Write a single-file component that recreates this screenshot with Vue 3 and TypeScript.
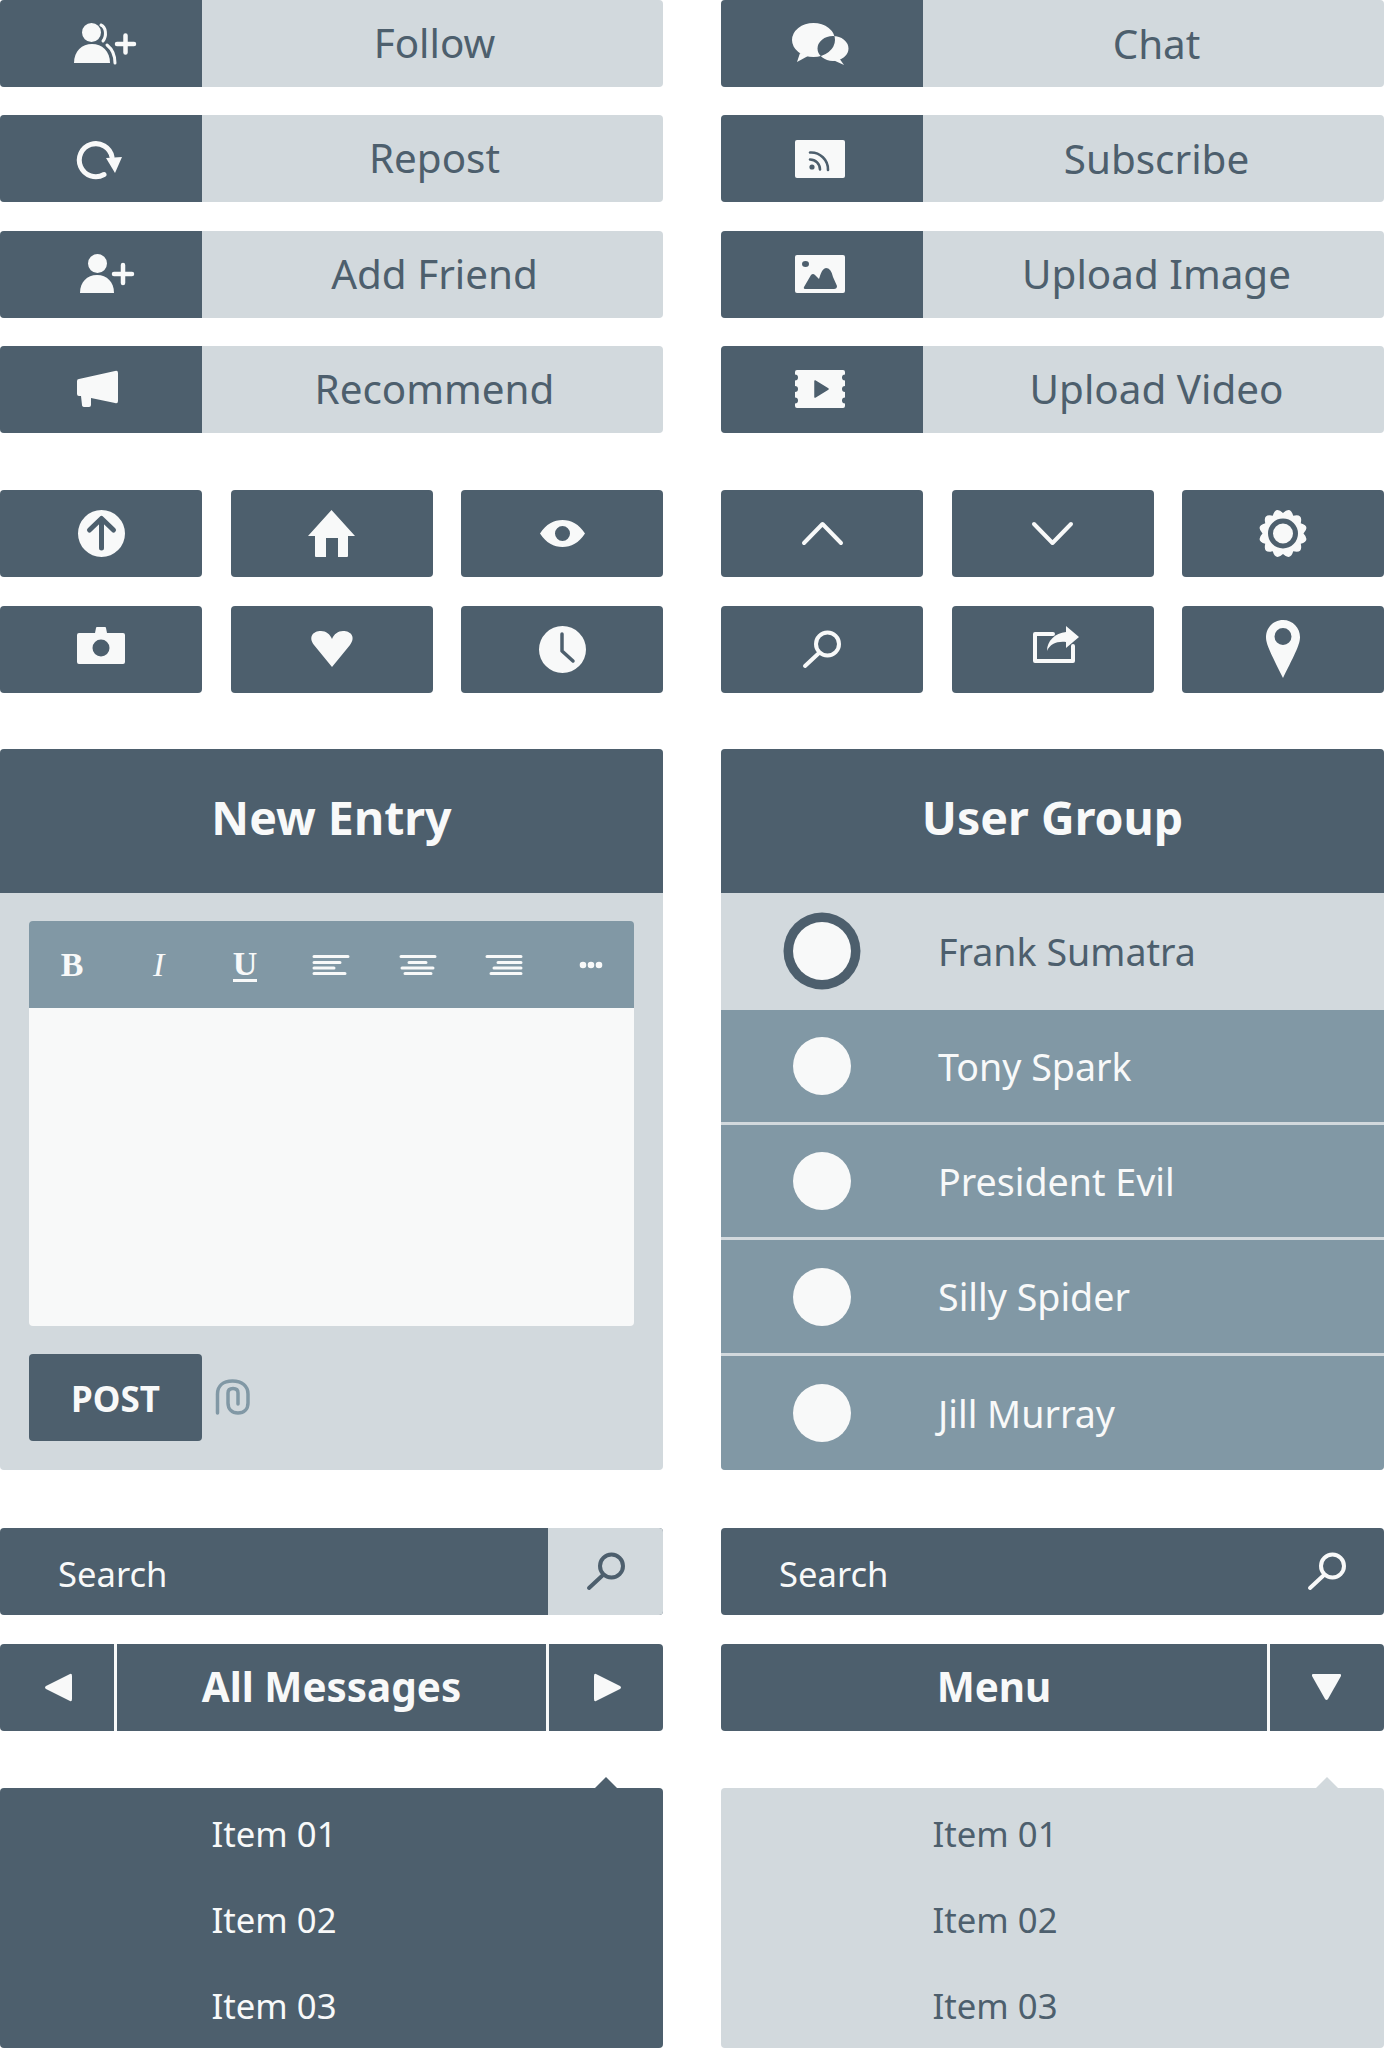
<script setup lang="ts">
import { h } from 'vue'

type Shape = { d: string; s?: number; cut?: boolean }
type IconDef = { w: number; h: number; x?: number; shapes: Shape[] }

const circle = (cx: number, cy: number, r: number, ry = r) =>
  `M${cx - r} ${cy}a${r} ${ry} 0 1 0 ${2 * r} 0a${r} ${ry} 0 1 0 ${-2 * r} 0Z`

const gear = () => {
  const pt = (r: number, a: number) => `${(24 + r * Math.cos(a)).toFixed(2)} ${(23.5 + r * Math.sin(a)).toFixed(2)}`
  const step = Math.PI / 6
  let d = `M${pt(20.5, 0)}`
  for (let i = 0; i < 12; i++) {
    d += `Q${pt(28.5, (i + 0.5) * step)} ${pt(20.5, (i + 1) * step)}`
  }
  return d + 'Z'
}

const icons: Record<string, IconDef> = {
  follow: {
    w: 62,
    h: 41,
    shapes: [
      { d: circle(17.5, 9.5, 9.5) },
      { d: 'M0 40C0 28 8 21 18 21S36 28 36 40Z' },
      { d: 'M27 2C32 4 33 13 29 18', s: 3 },
      { d: 'M33 22C38 26 41 32 41 40', s: 3 },
      { d: 'M43 21H60M51.5 12.5V29.5', s: 4.5 },
    ],
  },
  repost: {
    w: 44,
    h: 38,
    shapes: [
      { d: 'M34 17A16.5 16.5 0 1 0 26 34.5', s: 5 },
      { d: 'M28 18L44 17L37 33Z' },
    ],
  },
  friend: {
    w: 54,
    h: 40,
    shapes: [
      { d: circle(17.5, 9.5, 9.5) },
      { d: 'M0 39C0 28 7 21 17 21S34 28 34 39Z' },
      { d: 'M34 20H52M43 11V29', s: 4.5 },
    ],
  },
  megaphone: {
    w: 42,
    h: 38,
    shapes: [
      { d: 'M3 9L39 1Q42 0 42 3V31Q42 34 39 33L15 28V35Q15 37 13 37H9Q6 37 6 35L5 26H3Q1 26 1 24V11Q1 9 3 9Z' },
    ],
  },
  chat: {
    w: 57,
    h: 42,
    shapes: [
      { d: circle(21.5, 17, 21.5, 17) + circle(41, 25.5, 15.5, 12.5) },
      { d: 'M8 30L5 39L16 33Z' },
      { d: 'M47 35L52 42L41 37Z' },
    ],
  },
  rss: {
    w: 50,
    h: 38,
    shapes: [
      { d: 'M2 0H48Q50 0 50 2V36Q50 38 48 38H2Q0 38 0 36V2Q0 0 2 0Z' },
      { d: circle(17, 27, 2.6), cut: true },
      { d: 'M15 19.5A10 10 0 0 1 25 29.5', s: 2.6, cut: true },
      { d: 'M15 12.5A17 17 0 0 1 33 30', s: 2.6, cut: true },
    ],
  },
  image: {
    w: 50,
    h: 38,
    shapes: [
      { d: 'M2 0H48Q50 0 50 2V36Q50 38 48 38H2Q0 38 0 36V2Q0 0 2 0Z' },
      { d: circle(10.5, 9, 3.5, 3), cut: true },
      { d: 'M9 32L16 20Q18 18 20 20L24 24Q27 13 31 13Q36 13 38 22L42 31Q42 34 39 34H11Q8 34 9 32Z', cut: true },
    ],
  },
  video: {
    w: 50,
    h: 38,
    shapes: [
      { d: 'M2 0H48Q50 0 50 2V4.5A3 3 0 0 0 50 10.5V16A3 3 0 0 0 50 22V27.5A3 3 0 0 0 50 33.5V36Q50 38 48 38H2Q0 38 0 36V33.5A3 3 0 0 0 0 27.5V22A3 3 0 0 0 0 16V10.5A3 3 0 0 0 0 4.5V2Q0 0 2 0Z' },
      { d: 'M20 11L33 19L20 27Z', s: 1.5, cut: true },
      { d: 'M20 11L33 19L20 27Z', cut: true },
    ],
  },
  up: {
    w: 47,
    h: 47,
    shapes: [
      { d: circle(23.5, 23.5, 23.5) },
      { d: 'M23.5 38V10M11.5 20L23.5 8.5L35.5 20', s: 5, cut: true },
    ],
  },
  home: {
    w: 47,
    h: 47,
    shapes: [{ d: 'M23.5 0L47 26H40V46Q40 47 39 47H30V28H18V47H8Q7 47 7 46V26H0Z' }],
  },
  eye: {
    w: 45,
    h: 27,
    shapes: [{ d: 'M0 13.5C6 4 14 0 22.5 0S39 4 45 13.5C39 23 31 27 22.5 27S6 23 0 13.5Z' + circle(22.5, 13.5, 7.5) }],
  },
  // extra height / x keep these two off-centre in the tile, as drawn
  camera: {
    w: 48,
    h: 45,
    shapes: [
      { d: 'M18 6L19 1Q19 0 20 0H28Q29 0 29 1L30 6H46Q48 6 48 8V35Q48 37 46 37H2Q0 37 0 35V8Q0 6 2 6Z' + circle(24, 21, 8.5) },
    ],
  },
  heart: {
    w: 42,
    h: 36,
    shapes: [{ d: 'M21 36L3 14C-3 6 2 0 10 0C15 0 19 3 21 8C23 3 27 0 32 0C40 0 45 6 39 14Z' }],
  },
  clock: {
    w: 47,
    h: 47,
    shapes: [
      { d: circle(23.5, 23.5, 23.5) },
      { d: 'M23 8V25L34 35', s: 3.5, cut: true },
    ],
  },
  chevUp: { w: 41, h: 23, shapes: [{ d: 'M2 21L20.5 2L39 21', s: 4 }] },
  chevDown: { w: 41, h: 23, shapes: [{ d: 'M2 2L20.5 21L39 2', s: 4 }] },
  gear: {
    w: 48,
    h: 47,
    shapes: [
      { d: gear() },
      { d: circle(24, 23.5, 12.5), s: 5, cut: true },
    ],
  },
  search: {
    w: 38,
    h: 38,
    shapes: [
      { d: circle(24.5, 14, 11.5), s: 4 },
      { d: 'M16 23L2 36', s: 4 },
    ],
  },
  share: {
    w: 53,
    h: 46,
    x: -7,
    shapes: [
      { d: 'M20 8H2V35H40V20', s: 4 },
      { d: 'M33 0L46 11L33 22V16C24 15 17 18 14 25C14 15 22 7 33 6Z' },
    ],
  },
  pin: {
    w: 34,
    h: 58,
    shapes: [{ d: 'M17 0C7 0 0 8 0 17C0 24 4 32 17 58C30 32 34 24 34 17C34 8 27 0 17 0Z' + circle(17, 16.5, 8.5) }],
  },
  clip: {
    w: 35,
    h: 36,
    shapes: [
      { d: 'M2.5 34V15C2.5 7 8 2 17.5 2S33 7 33 15V24C33 30 29 34 23 34S13 30 13 24V14C13 11 15 9.5 18 9.5S23 11 23 14V25', s: 3.5 },
    ],
  },
  prev: { w: 27, h: 29, shapes: [{ d: 'M25 1Q27 0 27 3V26Q27 29 25 28L1 16Q-1 14.5 1 13Z' }] },
  next: { w: 27, h: 29, shapes: [{ d: 'M2 1Q0 0 0 3V26Q0 29 2 28L26 16Q28 14.5 26 13Z' }] },
  drop: { w: 29, h: 26, shapes: [{ d: 'M1 0H28Q29.5 0 29 2L16 25Q14.5 27 13 25L0 2Q-.5 0 1 0Z' }] },
  alignLeft: { w: 34, h: 20, shapes: [{ d: 'M0 1.5H34M0 7.5H26M0 13H20M0 18.5H31', s: 3 }] },
  alignCenter: { w: 34, h: 20, shapes: [{ d: 'M0 1.5H34M8 7.5H25M1 13H32M4 18.5H30', s: 3 }] },
  alignRight: { w: 34, h: 20, shapes: [{ d: 'M0 1.5H34M11 7.5H34M7 13H34M4 18.5H34', s: 3 }] },
  dots: { w: 24, h: 8, shapes: [{ d: circle(4, 4, 3.3) + circle(12, 4, 3.3) + circle(20, 4, 3.3) }] },
}

// small functional component so every icon goes through one svg template
const Icon = (props: { name: string }) => {
  const def = icons[props.name]
  return h(
    'svg',
    { width: def.w, height: def.h, viewBox: `${def.x ?? 0} 0 ${def.w} ${def.h}`, style: 'display:block;overflow:visible' },
    def.shapes.map((shape) =>
      h('path', {
        d: shape.d,
        'fill-rule': 'evenodd',
        fill: shape.s ? 'none' : shape.cut ? 'var(--cut)' : 'currentColor',
        stroke: shape.s ? (shape.cut ? 'var(--cut)' : 'currentColor') : 'none',
        'stroke-width': shape.s,
        'stroke-linecap': 'round',
        'stroke-linejoin': 'round',
      }),
    ),
  )
}
Icon.props = ['name']

// x = where the glyph starts inside the 202px icon cell
const leftButtons = [
  { icon: 'follow', label: 'Follow', x: 74 },
  { icon: 'repost', label: 'Repost', x: 78 },
  { icon: 'friend', label: 'Add Friend', x: 80 },
  { icon: 'megaphone', label: 'Recommend', x: 76 },
]
const rightButtons = [
  { icon: 'chat', label: 'Chat', x: 71 },
  { icon: 'rss', label: 'Subscribe', x: 74 },
  { icon: 'image', label: 'Upload Image', x: 74 },
  { icon: 'video', label: 'Upload Video', x: 74 },
]
const leftTiles = ['up', 'home', 'eye', 'camera', 'heart', 'clock']
const rightTiles = ['chevUp', 'chevDown', 'gear', 'search', 'share', 'pin']
const users = ['Frank Sumatra', 'Tony Spark', 'President Evil', 'Silly Spider', 'Jill Murray']
const items = ['Item 01', 'Item 02', 'Item 03']
</script>

<template>
  <div class="page">
    <section class="col col-left">
      <div class="buttons">
        <div v-for="b in leftButtons" :key="b.label" class="wide-btn">
          <span class="wide-icon" :style="{ paddingLeft: b.x + 'px' }"><Icon :name="b.icon" /></span>
          <span class="wide-label">{{ b.label }}</span>
        </div>
      </div>
      <div class="tiles">
        <div v-for="t in leftTiles" :key="t" class="tile"><Icon :name="t" /></div>
      </div>
      <div class="panel">
        <h2 class="panel-head">New Entry</h2>
        <div class="panel-body">
          <div class="editor">
            <div class="toolbar">
              <span class="tb tb-b">B</span>
              <span class="tb tb-i">I</span>
              <span class="tb tb-u">U</span>
              <span class="tb"><Icon name="alignLeft" /></span>
              <span class="tb"><Icon name="alignCenter" /></span>
              <span class="tb"><Icon name="alignRight" /></span>
              <span class="tb"><Icon name="dots" /></span>
            </div>
            <div class="editor-area"></div>
          </div>
          <div class="post-row">
            <button class="post">POST</button>
            <span class="clip"><Icon name="clip" /></span>
          </div>
        </div>
      </div>
      <div class="search">
        <span class="search-text">Search</span>
        <span class="search-btn light"><Icon name="search" /></span>
      </div>
      <div class="nav">
        <span class="nav-side"><Icon name="prev" /></span>
        <span class="nav-title">All Messages</span>
        <span class="nav-end"><Icon name="next" /></span>
      </div>
      <ul class="drop drop-dark">
        <li v-for="i in items" :key="i">{{ i }}</li>
      </ul>
    </section>

    <section class="col col-right">
      <div class="buttons">
        <div v-for="b in rightButtons" :key="b.label" class="wide-btn">
          <span class="wide-icon" :style="{ paddingLeft: b.x + 'px' }"><Icon :name="b.icon" /></span>
          <span class="wide-label">{{ b.label }}</span>
        </div>
      </div>
      <div class="tiles">
        <div v-for="t in rightTiles" :key="t" class="tile"><Icon :name="t" /></div>
      </div>
      <div class="panel">
        <h2 class="panel-head">User Group</h2>
        <ul class="users">
          <li v-for="(u, idx) in users" :key="u" class="user" :class="{ active: idx === 0 }">
            <span class="avatar-cell"><span class="avatar"></span></span>
            <span class="user-name">{{ u }}</span>
          </li>
        </ul>
      </div>
      <div class="search">
        <span class="search-text">Search</span>
        <span class="search-btn"><Icon name="search" /></span>
      </div>
      <div class="nav">
        <span class="nav-title">Menu</span>
        <span class="nav-end"><Icon name="drop" /></span>
      </div>
      <ul class="drop drop-light">
        <li v-for="i in items" :key="i">{{ i }}</li>
      </ul>
    </section>
  </div>
</template>

<style scoped>
.page {
  --dark: #4d5f6d;
  --light: #d2d9dd;
  --mid: #8198a5;
  --paper: #f8f9f9;
  --cut: #4d5f6d;
  display: grid;
  grid-template-columns: 663px 663px;
  column-gap: 58px;
  width: 1384px;
  font-family: "Noto Sans", "Open Sans", sans-serif;
  color: var(--dark);
}

.col {
  display: flex;
  flex-direction: column;
}

.buttons {
  display: grid;
  grid-auto-rows: 87px;
  row-gap: 28.33px;
}

.wide-btn {
  display: flex;
  border-radius: 4px;
  overflow: hidden;
  background: var(--light);
}

.wide-icon {
  flex: 0 0 202px;
  box-sizing: border-box;
  display: flex;
  align-items: center;
  background: var(--dark);
  color: var(--paper);
}

.wide-label {
  flex: 1;
  display: flex;
  align-items: center;
  justify-content: center;
  padding: 0 0 2px 4px;
  font-size: 40.4px;
}

.col-right .wide-label {
  padding-left: 6px;
  padding-bottom: 1px;
}

.tiles {
  display: grid;
  grid-template-columns: repeat(3, 202px);
  grid-auto-rows: 87px;
  column-gap: 28.5px;
  row-gap: 29px;
  margin-top: 57px;
}

.tile {
  display: flex;
  align-items: center;
  justify-content: center;
  border-radius: 4px;
  background: var(--dark);
  color: var(--paper);
}

.panel {
  margin-top: 56px;
  height: 721px;
  border-radius: 4px;
  overflow: hidden;
  background: var(--light);
}

.panel-head {
  margin: 0;
  height: 144px;
  box-sizing: border-box;
  padding-bottom: 7px;
  display: flex;
  align-items: center;
  justify-content: center;
  background: var(--dark);
  color: var(--paper);
  font-size: 46.5px;
  font-weight: 700;
}

.panel-body {
  padding: 28px 29px;
}

.editor {
  height: 405px;
  display: flex;
  flex-direction: column;
  border-radius: 4px;
  overflow: hidden;
}

.toolbar {
  flex: 0 0 87px;
  box-sizing: border-box;
  padding-top: 2px;
  display: grid;
  grid-template-columns: repeat(7, 1fr);
  align-items: center;
  justify-items: center;
  background: var(--mid);
  color: var(--paper);
}

.tb {
  font-family: "Liberation Serif", serif;
  font-size: 34px;
  line-height: 1;
}

.tb-b {
  font-weight: 700;
}

.tb-i {
  font-style: italic;
}

.tb-u {
  font-weight: 700;
  border-bottom: 3px solid var(--paper);
  line-height: 30px;
}

.editor-area {
  flex: 1;
  background: var(--paper);
}

.post-row {
  display: flex;
  align-items: center;
  gap: 13px;
  margin-top: 28px;
}

.post {
  width: 173px;
  height: 87px;
  border: 0;
  padding: 2px 0 0;
  border-radius: 4px;
  background: var(--dark);
  color: var(--paper);
  font-family: inherit;
  font-size: 35px;
  font-weight: 700;
}

.clip {
  color: var(--mid);
}

.search {
  display: flex;
  height: 87px;
  margin-top: 58px;
  border-radius: 4px;
  overflow: hidden;
  background: var(--dark);
  color: var(--paper);
}

.search-text {
  flex: 1;
  display: flex;
  align-items: center;
  padding: 5px 0 0 58px;
  font-size: 34.6px;
}

.search-btn {
  flex: 0 0 115px;
  display: flex;
  align-items: center;
  justify-content: center;
}

.search-btn.light {
  background: var(--light);
  color: var(--dark);
}

.nav {
  display: flex;
  height: 87px;
  margin-top: 29px;
  border-radius: 4px;
  overflow: hidden;
  background: var(--dark);
  color: var(--paper);
}

.nav-side,
.nav-end {
  box-sizing: border-box;
  flex: 0 0 117px;
  display: flex;
  align-items: center;
  justify-content: center;
}

.nav-side {
  padding-left: 3px;
  border-right: 3px solid var(--paper);
}

.nav-end {
  border-left: 3px solid var(--paper);
}

.col-left .nav-end {
  padding-left: 2px;
}

.col-right .nav-end {
  padding-right: 2px;
}

.nav-title {
  flex: 1;
  display: flex;
  align-items: center;
  justify-content: center;
  padding-bottom: 2px;
  font-size: 40.4px;
  font-weight: 700;
}

.drop {
  position: relative;
  margin: 57px 0 0;
  padding: 3px 0 0;
  height: 260px;
  box-sizing: border-box;
  list-style: none;
  border-radius: 4px;
  font-size: 34.7px;
}

.drop::before {
  content: "";
  position: absolute;
  top: -11px;
  left: 594.5px;
  border-left: 11px solid transparent;
  border-right: 11px solid transparent;
  border-bottom: 11px solid currentColor;
}

.drop li {
  display: flex;
  align-items: center;
  height: 86px;
  padding-left: 211.5px;
}

.drop-dark {
  background: var(--dark);
  color: var(--paper);
}

.drop-dark::before {
  border-bottom-color: var(--dark);
}

.drop-light {
  background: var(--light);
  color: var(--dark);
}

.drop-light::before {
  border-bottom-color: var(--light);
}

.users {
  margin: 0;
  padding: 0;
  list-style: none;
}

.user {
  display: flex;
  align-items: center;
  height: 115.25px;
  box-sizing: border-box;
  background: var(--mid);
  color: var(--paper);
  border-bottom: 3px solid var(--light);
  font-size: 37.6px;
}

.user:last-child {
  border-bottom: 0;
}

.user.active {
  height: 117px;
  background: var(--light);
  color: var(--dark);
  border-bottom: 0;
}

.avatar-cell {
  flex: 0 0 202px;
  display: flex;
  justify-content: center;
}

.avatar {
  width: 58px;
  height: 58px;
  border-radius: 50%;
  background: var(--paper);
}

.user.active .avatar {
  box-shadow: 0 0 0 9.5px var(--dark);
}

.user-name {
  padding-left: 15px;
}
</style>
